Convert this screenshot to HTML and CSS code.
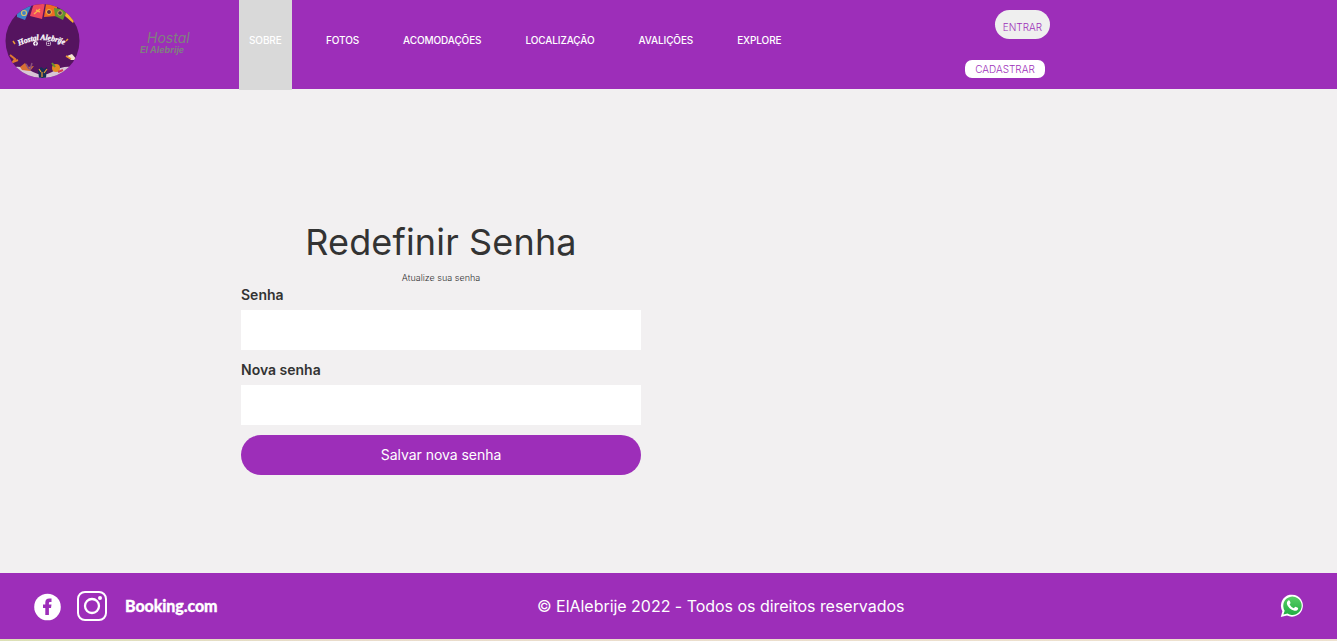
FILE: index.html
```html
<!DOCTYPE html>
<html lang="pt-BR">
<head>
<meta charset="utf-8">
<title>Redefinir Senha</title>
<link rel="stylesheet" href="styles.css">
</head>
<body>
<header class="header">
  <svg class="logo" width="76" height="76" viewBox="0 0 76 76">
    <defs><clipPath id="disc"><circle cx="37.500" cy="38" r="37"/></clipPath></defs>
    <circle cx="37.500" cy="38" r="37" fill="#55145f"/>
    <g clip-path="url(#disc)">
      <path d="M12 7L17 3L27 1L20 17L12 14Z" fill="#3d83c9"/>
      <path d="M29 0H40L37 16L25 13Z" fill="#ee4960"/>
      <path d="M41 1H52L52 13L39 14Z" fill="#f06a24"/>
      <path d="M49 5L62 7L58 17L50 13Z" fill="#62962f"/>
      <path d="M61 9L72 12L68 20L60 13Z" fill="#f7b62c"/>
      <circle cx="19" cy="10" r="2.500" fill="none" stroke="#d9bd67" stroke-width="1.200"/>
      <path d="M29 11L35 6M31 7L35 9" stroke="#f9b04b" stroke-width="1.500"/>
      <circle cx="44" cy="9" r="2.500" fill="#57304d" stroke="#f7bc45"/>
      <circle cx="55" cy="10" r="2.300" fill="#47344f" stroke="#d8a05c"/>
      <path d="M10 64Q18 63 28 69Q38 74 47 69Q57 63 66 64L60 76H18Z" fill="#d8c5d5"/>
      <path d="M15 64L20 60L23 64L29 63L25 68L17 67Z" fill="#d87032"/>
      <path d="M21 61L24 66M27 60L25 67" stroke="#88507d" stroke-width="1.500"/>
      <path d="M33 67L36 64L39 66L42 64L41 75H34Z" fill="#172e56"/>
      <path d="M34 66L36 69M42 66L39 70M37 69V74" stroke="#ef9b34" stroke-width="1.200"/>
      <ellipse cx="51" cy="65" rx="4" ry="4" fill="#e38a22"/>
      <path d="M47 60L50 64" stroke="#65932c" stroke-width="2"/>
      <path d="M53 69L58 67" stroke="#d73c53" stroke-width="2"/>
      <path d="M62 53L67 51L72 57L66 57Z" fill="#f4e6cf"/>
      <path d="M5 52L10 56L8 59L13 57" fill="none" stroke="#df7931" stroke-width="2"/>
      <path d="M61 53L66 56M8 38L10 41M61 38L63 36" stroke="#e69935" stroke-width="1.500"/>
    </g>
    <path id="arc" d="M14 43Q37 31 62 43" fill="none"/>
    <text class="logo-script"><textPath href="#arc" textLength="47">Hostal Alebrije</textPath></text>
    <circle cx="30.500" cy="40.500" r="2.400" fill="#fff"/>
    <path d="M31.500 39H30.700V43M29.500 40.500H31.500" fill="none" stroke="#55145f" stroke-width=".7"/>
    <rect x="41.500" y="38.500" width="4" height="4" rx="1" fill="none" stroke="#d9c9dc" stroke-width=".8"/>
    <circle cx="43.500" cy="40.500" r=".8" fill="#d9c9dc"/>
  </svg>
  <div class="brand"><span class="brand-top">Hostal</span><span class="brand-name">El Alebrije</span></div>
  <nav class="nav">
    <a class="nav-link active">SOBRE</a>
    <a class="nav-link">FOTOS</a>
    <a class="nav-link">ACOMODAÇÕES</a>
    <a class="nav-link">LOCALIZAÇÃO</a>
    <a class="nav-link">AVALIÇÕES</a>
    <a class="nav-link">EXPLORE</a>
  </nav>
  <div class="account">
    <button class="login">ENTRAR</button>
    <button class="signup">CADASTRAR</button>
  </div>
</header>
<main class="main">
  <form class="form">
    <h1 class="title">Redefinir Senha</h1>
    <p class="subtitle">Atualize sua senha</p>
    <label class="label" for="password">Senha</label>
    <input class="field" id="password" type="password">
    <label class="label" for="new-password">Nova senha</label>
    <input class="field" id="new-password" type="password">
    <button class="save" type="button">Salvar nova senha</button>
  </form>
</main>
<footer class="footer">
  <div class="social">
    <svg class="facebook" width="28" height="28" viewBox="0 0 28 28"><circle cx="14.500" cy="14" r="13.300" fill="#fff"/><path d="M12.300 22V15H10V11.500H12.300V9.500Q12.300 5.500 16.300 5.500H18.500V9H17Q15.900 9 15.900 10.200V11.500H18.500L18 15H15.900V22Z" fill="#9d2eb9"/></svg>
    <svg class="instagram" width="30" height="30" viewBox="0 0 30 30" fill="none" stroke="#fff"><rect x="1" y="1" width="28" height="28" rx="7" stroke-width="2"/><circle cx="15" cy="15" r="7" stroke-width="2.300"/><circle cx="23" cy="7" r="2" fill="#fff" stroke="none"/></svg>
    <span class="booking">Booking.com</span>
  </div>
  <p class="copyright">© ElAlebrije 2022 - Todos os direitos reservados</p>
  <svg class="whatsapp" width="24" height="24" viewBox="0 0 24 24"><defs><linearGradient id="green" x2="0" y2="1"><stop stop-color="#58ce65"/><stop offset="1" stop-color="#22ad43"/></linearGradient></defs><path d="M.8 23L2.400 17.200A11 11 0 1 1 7 21.500Z" fill="#fff"/><path d="M3.400 20.600L4.700 16.700A9.200 9.200 0 1 1 7.500 19.500Z" fill="url(#green)"/><path d="M8.200 6.500Q9.300 5.900 9.800 7L10.500 8.800Q10.700 9.400 9.600 10.400Q11 13 13.800 14.200L15 12.900Q15.400 12.500 16 12.900L17.800 13.800Q18.400 14.200 18 15.200Q17 17.200 14.600 16.800Q8.500 15.200 6.900 10Q6.500 7.700 8.200 6.500Z" fill="#fff"/></svg>
</footer>
<div class="strip"></div>
</body>
</html>
```
FILE: styles.css
```css
* { box-sizing: border-box; }
body {
  margin: 0;
  height: 641px;
  display: flex;
  flex-direction: column;
  overflow: hidden;
  background: #f2f0f1;
  color: #333;
  font-family: Inter, "Liberation Sans", sans-serif;
}
button { border: 0; margin: 0; padding: 0; font-family: inherit; }
.header {
  height: 89px;
  flex: none;
  display: flex;
  align-items: flex-start;
  background: #9d2eb9;
}
.logo { margin: 3px 0 0 5px; flex: none; }
.logo-script { fill: #fff; stroke: #fff; stroke-width: .25px; font: italic bold 8px "Liberation Serif", serif; }
.brand {
  width: 99px;
  margin-left: 59px;
  padding-top: 30px;
  display: flex;
  flex-direction: column;
  color: #808080;
  font-style: italic;
}
.brand-top { margin-left: 7px; font-size: 14px; line-height: 16px; }
.brand-name { font-size: 9px; font-weight: 700; line-height: 8px; }
.nav { display: flex; gap: 24px; width: 725px; }
.nav-link {
  height: 90px;
  padding: 0 10px;
  line-height: 81px;
  font-size: 10px;
  font-weight: 500;
  letter-spacing: -.11px;
  color: #fff;
  white-space: nowrap;
}
.active { width: 53px; background: #d9d9d9; }
.account {
  width: 86px;
  padding-top: 10px;
  display: flex;
  flex-direction: column;
  align-items: flex-end;
  gap: 21px;
}
.login, .signup { color: #9d2eb9; font-size: 10px; font-weight: 300; }
.login { width: 55px; height: 29px; padding-top: 5px; border-radius: 15px; background: #efefef; }
.signup { width: 80px; height: 18px; margin-right: 5px; border-radius: 7px; background: #fff; }
.main { flex: 1; padding: 131px 0 0 241px; }
.form { width: 400px; display: flex; flex-direction: column; }
.title { margin: 0; height: 52px; line-height: 45px; font-size: 36px; font-weight: 420; letter-spacing: .15px; text-align: center; }
.subtitle { margin: 0; height: 13px; line-height: 12px; font-size: 9px; font-weight: 300; text-align: center; }
.label { height: 25px; line-height: 20px; font-size: 14px; font-weight: 600; }
.field { height: 40px; margin: 0 0 10px; border: 0; background: #fff; }
.save { height: 40px; padding-bottom: 2px; border-radius: 20px; background: #9d2eb9; color: #fff; font-size: 14px; letter-spacing: -.03px; }
.footer {
  height: 66px;
  flex: none;
  padding: 0 33px;
  display: flex;
  align-items: center;
  background: #9d2eb9;
  color: #fff;
}
.social { width: 504px; display: flex; align-items: center; }
.facebook { margin-top: 2px; }
.instagram { margin-left: 16px; }
.booking { margin-left: 18px; padding-bottom: 2px; font-family: Lato, sans-serif; font-size: 16px; font-weight: 900; letter-spacing: -.1px; -webkit-text-stroke: .3px #fff; }
.copyright { margin: 0; font-size: 16px; letter-spacing: -.03px; }
.whatsapp { margin-left: auto; }
.strip { height: 2px; flex: none; background: linear-gradient(90deg, #dce1b6, #e9dccb 25%, #eee2cf); }
```
